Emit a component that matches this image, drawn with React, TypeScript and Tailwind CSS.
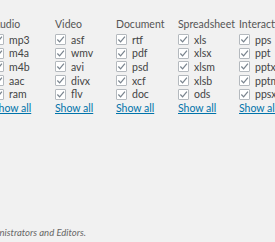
import React from 'react';

const groups = [
  { title: 'Audio', items: ['mp3', 'm4a', 'm4b', 'aac', 'ram'] },
  { title: 'Video', items: ['asf', 'wmv', 'avi', 'divx', 'flv'] },
  { title: 'Document', items: ['rtf', 'pdf', 'psd', 'xcf', 'doc'] },
  { title: 'Spreadsheet', items: ['xls', 'xlsx', 'xlsm', 'xlsb', 'ods'] },
  { title: 'Interactive', items: ['pps', 'ppt', 'pptx', 'pptm', 'ppsx'] },
];

function Check() {
  return (
    <span className="flex h-[11px] w-[11px] shrink-0 items-center justify-center rounded-[1px] border border-[#b4b9be] bg-white">
      <svg viewBox="0 0 10 10" className="h-[9px] w-[9px]">
        <path d="M1.5 5 L4 7.6 L8.8 1.8" fill="none" stroke="#7a848e" strokeWidth="1.4" />
      </svg>
    </span>
  );
}

export default function App() {
  return (
    <div className="h-[242px] w-[275px] overflow-hidden bg-[#f1f1f1] text-[#444] font-['Lato',sans-serif] text-[10.5px]">
      <div className="ml-[-7px] pt-[18px] grid grid-cols-[62px_61px_62px_61px_62px]">
        {groups.map((g) => (
          <div key={g.title} className="flex flex-col">
            <div className="h-[12px] leading-[12px] text-[#555]">{g.title}</div>
            <div className="mt-[3px] flex flex-col">
              {g.items.map((it) => (
                <label key={it} className="flex h-[13.6px] items-center gap-[5px]">
                  <Check />
                  <span className="leading-[12px]">{it}</span>
                </label>
              ))}
            </div>
            <a className="mt-[1px] leading-[12px] text-[#0073aa] underline">Show all</a>
          </div>
        ))}
      </div>
      <p className="ml-[-21px] mt-[113px] italic text-[#666] leading-[12px] text-[9.5px]">Administrators and Editors.</p>
    </div>
  );
}
